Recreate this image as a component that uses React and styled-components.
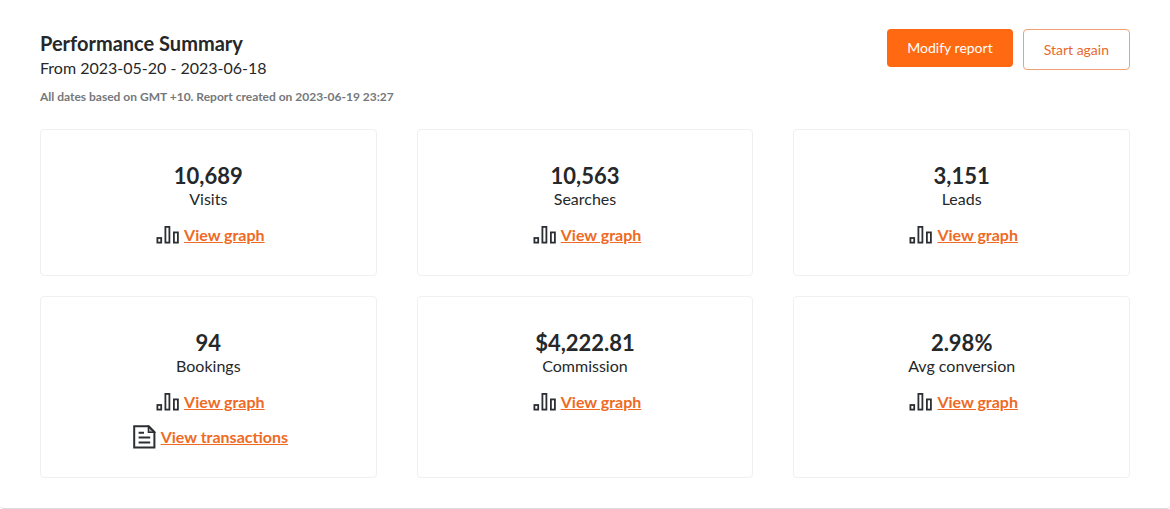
import React from "react";
import styled, { createGlobalStyle } from "styled-components";

const GlobalStyle = createGlobalStyle`
  * {
    box-sizing: border-box;
  }
  body {
    margin: 0;
    background: #fff;
    color: #25282a;
    font-family: Lato, "Liberation Sans", sans-serif;
    font-size: 16px;
  }
`;
const Panel = styled.main`
  padding: 29px 40px 30px;
  border-bottom: 1px solid #dcdcdc;
  border-radius: 4px;
`;
const Header = styled.header`
  display: flex;
  justify-content: space-between;
  align-items: flex-start;
  margin-bottom: 22px;
`;
const Title = styled.h1`
  margin: 1px 0 0;
  font-size: 20px;
  line-height: 26px;
  font-weight: 700;
`;
const Period = styled.p`
  margin: 0;
  font-size: 16px;
  line-height: 24px;
`;
const Note = styled.p`
  margin: 7px 0 0;
  font-size: 12px;
  line-height: 20px;
  font-weight: 700;
  color: #75787b;
`;
const Actions = styled.div`
  display: flex;
  align-items: flex-start;
  gap: 10px;
`;
const Button = styled.button`
  padding: ${(props) => (props.$outline ? "10px 20px" : "9px 20px")};
  border: ${(props) => (props.$outline ? "1px solid #f0a174" : "0")};
  border-radius: 4px;
  background: ${(props) => (props.$outline ? "#fff" : "#ff6912")};
  color: ${(props) => (props.$outline ? "#e8692c" : "#fff")};
  font-family: inherit;
  font-size: 14px;
  line-height: ${(props) => (props.$outline ? "19px" : "20px")};
  cursor: pointer;
`;
const Grid = styled.section`
  display: grid;
  grid-template-columns: repeat(3, 1fr);
  gap: 20px 40px;
`;
const Card = styled.article`
  display: flex;
  flex-direction: column;
  align-items: center;
  padding: 33px 20px 28px;
  border: 1px solid #f0f0f0;
  border-radius: 4px;
`;
const Value = styled.strong`
  font-size: 22px;
  line-height: 26px;
  font-weight: 700;
`;
const Label = styled.span`
  font-size: 16px;
  line-height: 20px;
`;
const Links = styled.div`
  display: flex;
  flex-direction: column;
  align-items: center;
  gap: 10px;
  margin-top: 13px;
  padding-left: 4px;
`;
const Item = styled.div`
  display: flex;
  align-items: center;
  gap: 4px;
  height: 25px;
`;
const Link = styled.a`
  color: #ee6a25;
  font-size: 16px;
  line-height: 24px;
  font-weight: 700;
  text-decoration: underline;
`;

const GraphIcon = () => (
  <svg width="24" height="24" viewBox="0 0 24 24" fill="none" stroke="#2b2f33" strokeWidth="1.8" aria-hidden="true">
    <rect x="1.4" y="15" width="3.8" height="4.6" />
    <rect x="9.4" y="3.9" width="4" height="15.7" />
    <rect x="17.9" y="9.4" width="4" height="10.2" />
  </svg>
);

const DocumentIcon = () => (
  <svg width="24" height="24" viewBox="0 0 24 24" fill="none" stroke="#2b2f33" strokeWidth="2" aria-hidden="true">
    <path d="M1.2 1.2H15.8L21.4 6.8V22.6H1.2Z" />
    <path d="M15.4 1.5V7.2H21.4L15.4 1.5Z" fill="#2b2f33" fillOpacity="0.4" strokeWidth="1.4" />
    <path d="M5.6 7.8H11M5.6 12.6H17.2M5.6 17.4H17.2" strokeWidth="2" />
  </svg>
);

const stats = [
  { label: "Visits", value: "10,689" },
  { label: "Searches", value: "10,563" },
  { label: "Leads", value: "3,151" },
  { label: "Bookings", value: "94", transactions: true },
  { label: "Commission", value: "$4,222.81" },
  { label: "Avg conversion", value: "2.98%" },
];

const App = () => {
  return (
    <>
      <GlobalStyle />
      <Panel>
        <Header>
          <div>
            <Title>Performance Summary</Title>
            <Period>From 2023-05-20 - 2023-06-18</Period>
            <Note>All dates based on GMT +10. Report created on 2023-06-19 23:27</Note>
          </div>
          <Actions>
            <Button type="button">Modify report</Button>
            <Button type="button" $outline>Start again</Button>
          </Actions>
        </Header>
        <Grid>
          {stats.map((stat) => (
            <Card key={stat.label}>
              <Value>{stat.value}</Value>
              <Label>{stat.label}</Label>
              <Links>
                <Item>
                  <GraphIcon />
                  <Link href="#graph">View graph</Link>
                </Item>
                {stat.transactions && (
                  <Item>
                    <DocumentIcon />
                    <Link href="#transactions">View transactions</Link>
                  </Item>
                )}
              </Links>
            </Card>
          ))}
        </Grid>
      </Panel>
    </>
  );
};

export default App;
